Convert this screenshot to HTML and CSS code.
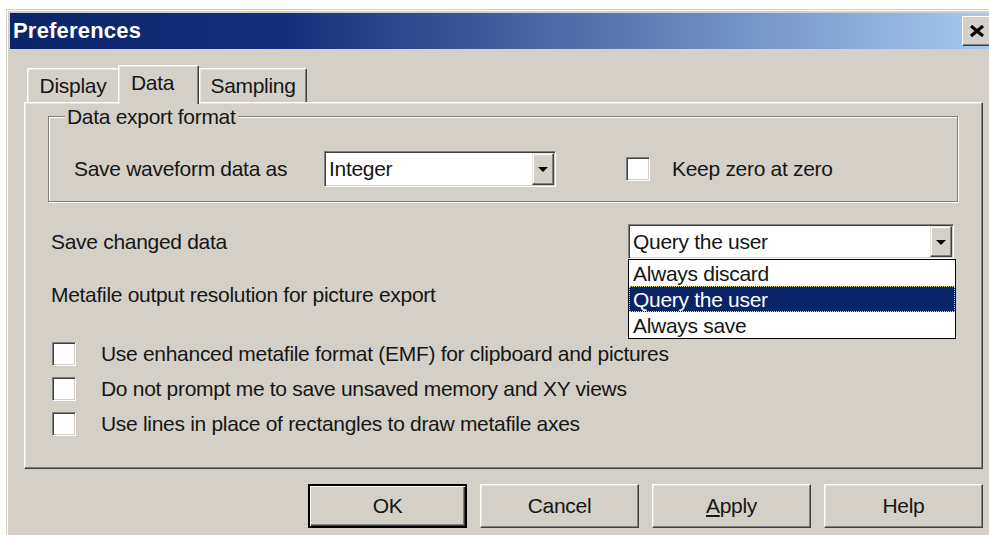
FILE: index.html
```html
<!DOCTYPE html>
<html>
<head>
<meta charset="utf-8">
<title>Preferences</title>
<link rel="stylesheet" href="styles.css">
</head>
<body>
<div class="window">
  <div class="titlebar">
    <span class="title">Preferences</span>
    <span class="close-btn">
      <svg width="16" height="12" viewBox="0 0 16 12"><path d="M2 1 L14 11 M14 1 L2 11" stroke="#000" stroke-width="3.2" fill="none"/></svg>
    </span>
  </div>
  <div class="dialog-body">
    <div class="tabs">
      <div class="tab tab-display">Display</div>
      <div class="tab tab-data active">Data</div>
      <div class="tab tab-sampling">Sampling</div>
    </div>
    <div class="panel">
      <div class="group">
        <div class="group-title">Data export format</div>
        <div class="group-row">
          <span class="label label-wave">Save waveform data as</span>
          <div class="combo combo-format">
            <span class="combo-text">Integer</span>
            <span class="combo-btn"><span class="arrow"></span></span>
          </div>
          <span class="check check-zero"></span>
          <span class="label label-zero">Keep zero at zero</span>
        </div>
      </div>

      <div class="row row-changed">
        <span class="label">Save changed data</span>
        <div class="combo combo-changed">
          <span class="combo-text">Query the user</span>
          <span class="combo-btn"><span class="arrow"></span></span>
          <ul class="dropdown">
            <li>Always discard</li>
            <li class="selected">Query the user</li>
            <li>Always save</li>
          </ul>
        </div>
      </div>

      <div class="row row-meta">
        <span class="label">Metafile output resolution for picture export</span>
      </div>

      <div class="checks">
        <div class="check-row"><span class="check"></span><span class="label">Use enhanced metafile format (EMF) for clipboard and pictures</span></div>
        <div class="check-row"><span class="check"></span><span class="label">Do not prompt me to save unsaved memory and XY views</span></div>
        <div class="check-row"><span class="check"></span><span class="label">Use lines in place of rectangles to draw metafile axes</span></div>
      </div>
    </div>

    <div class="buttons">
      <div class="btn btn-default">OK</div>
      <div class="btn">Cancel</div>
      <div class="btn"><u>A</u>pply</div>
      <div class="btn">Help</div>
    </div>
  </div>
</div>
</body>
</html>
```

FILE: styles.css
```css
* { box-sizing: border-box; }

html, body {
  margin: 0;
  padding: 0;
  background: #fff;
  overflow: hidden;
  width: 989px;
  height: 535px;
}

body {
  font-family: "Liberation Sans", Arial, sans-serif;
  font-size: 21px;
  letter-spacing: -0.3px;
  color: #161616;
}

/* dialog frame */
.window {
  margin: 9px 0 0 6px;
  width: 1000px;
  height: 540px;
  background: #d4d0c8;
  border-top: 1px solid #d4d0c8;
  border-left: 1px solid #d4d0c8;
  padding: 3px 0 0 3px;
  box-shadow: inset 1px 1px #fff;
}

.titlebar {
  width: 984px;
  height: 36px;
  display: flex;
  align-items: center;
  justify-content: space-between;
  padding-left: 3px;
  background: linear-gradient(to right, #0a246a 0%, #14307a 28%, #a6caf0 100%);
}

.title {
  color: #fff;
  font-weight: bold;
  font-size: 22px;
  letter-spacing: 0.2px;
}

.close-btn {
  width: 32px;
  height: 30px;
  display: flex;
  align-items: center;
  justify-content: center;
  padding-right: 2px;
  background: #d4d0c8;
  border: 1px solid;
  border-color: #fff #404040 #404040 #fff;
  box-shadow: inset -1px -1px #808080;
}

.dialog-body {
  width: 984px;
  padding: 16px 11px 0 14px;
}

/* tab strip */
.tabs {
  display: flex;
  align-items: flex-end;
  height: 37px;
  padding-left: 3px;
}

.tab {
  height: 34px;
  display: flex;
  align-items: center;
  justify-content: center;
  padding-top: 1px;
  background: #d4d0c8;
  border-top: 1px solid #fff;
  border-left: 1px solid #fff;
  border-right: 1px solid #404040;
  border-top-left-radius: 2px;
  border-top-right-radius: 2px;
  box-shadow: inset -1px 0 #808080, inset 1px 1px #e6e4df;
}

.tab-display { width: 91px; border-right: none; box-shadow: inset 1px 1px #e6e4df; }
.tab-data { width: 81px; padding-right: 12px; }
.tab-sampling { width: 108px; }

.tab.active {
  height: 39px;
  margin-bottom: -2px;
  position: relative;
  z-index: 1;
  padding-top: 0;
  padding-bottom: 5px;
}

/* tab page */
.panel {
  height: 367px;
  padding: 0 24px 0 23px;
  border: 1px solid;
  border-color: #fff #404040 #404040 #fff;
  box-shadow: inset -1px -1px #808080, inset 1px 1px #e6e4df;
}

.group {
  margin-top: 13px;
  padding: 0 0 14px 25px;
  border: 1px solid #808080;
  box-shadow: inset 1px 1px #fff, 1px 1px #fff;
}

.group-title {
  display: table;
  margin: -11px 0 0 -9px;
  padding: 0 2px;
  line-height: 22px;
  background: #d4d0c8;
}

.group-row {
  display: flex;
  align-items: center;
  height: 36px;
  margin-top: 23px;
}

.label { white-space: nowrap; }

.label-wave { width: 250px; }

.check-zero { margin-left: 70px; }
.label-zero { margin-left: 22px; }

/* sunken fields */
.combo {
  position: relative;
  display: flex;
  align-items: center;
  justify-content: space-between;
  background: #fff;
  border: 1px solid;
  border-color: #808080 #fff #fff #808080;
  box-shadow: inset 1px 1px #404040, inset -1px -1px #d4d0c8;
  padding: 1px;
}

.combo-text { padding-left: 3px; }

.combo-format { width: 232px; height: 36px; }

.combo-changed { width: 326px; height: 35px; margin-right: 4px; }

.combo-btn {
  width: 22px;
  height: 100%;
  display: flex;
  align-items: center;
  justify-content: center;
  background: #d4d0c8;
  border: 1px solid;
  border-color: #e6e4df #404040 #404040 #e6e4df;
  box-shadow: inset -1px -1px #808080, inset 1px 1px #fff;
}

.arrow {
  width: 0;
  height: 0;
  margin-top: 1px;
  border-left: 5px solid transparent;
  border-right: 5px solid transparent;
  border-top: 5px solid #000;
}

.row {
  display: flex;
  align-items: center;
  padding-left: 3px;
}

.row-changed {
  justify-content: space-between;
  height: 35px;
  margin-top: 22px;
}

.row-meta {
  height: 32px;
  margin-top: 20px;
}

/* open list of the combo */
.dropdown {
  position: absolute;
  top: calc(100% + 1px);
  left: -1px;
  width: 328px;
  margin: 0;
  padding: 0;
  list-style: none;
  background: #fff;
  border: 1px solid #000;
  z-index: 2;
}

.dropdown li {
  height: 26px;
  line-height: 27px;
  padding-left: 4px;
}

.dropdown li.selected {
  background: #0a246a;
  color: #fff;
  outline: 1px dotted #e8e4a0;
  outline-offset: -1px;
}

.check {
  flex: none;
  width: 24px;
  height: 24px;
  background: #fff;
  border: 1px solid;
  border-color: #808080 #fff #fff #808080;
  box-shadow: inset 1px 1px #404040, inset -1px -1px #d4d0c8;
}

.checks {
  margin-top: 25px;
  padding-left: 4px;
}

.check-row {
  display: flex;
  align-items: center;
  height: 35px;
}

.check-row .label { margin-left: 25px; }

/* command buttons */
.buttons {
  display: flex;
  justify-content: flex-end;
  gap: 13px;
  margin-top: 15px;
}

.btn {
  width: 159px;
  height: 44px;
  display: flex;
  align-items: center;
  justify-content: center;
  background: #d4d0c8;
  border: 1px solid;
  border-color: #fff #404040 #404040 #fff;
  box-shadow: inset -1px -1px #808080, inset 1px 1px #e6e4df;
}

.btn u { text-underline-offset: 2px; }

.btn-default {
  border: 2px solid #000;
  box-shadow: inset 1px 1px #fff, inset -1px -1px #404040, inset -2px -2px #808080;
}
```
